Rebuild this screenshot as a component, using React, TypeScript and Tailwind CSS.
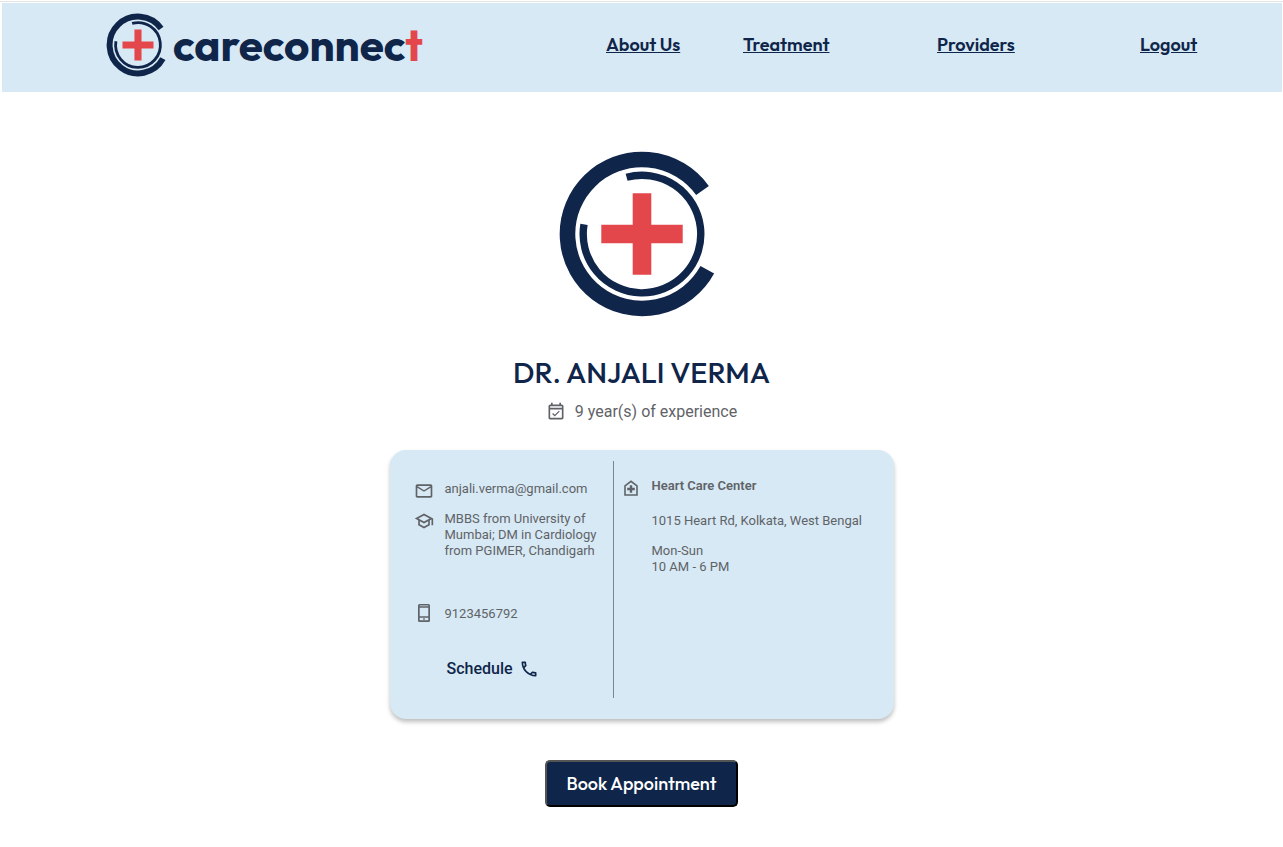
import type { ReactNode } from "react";
import {
  MdOutlineCall,
  MdOutlineEventAvailable,
  MdOutlineMail,
  MdOutlineSchool,
} from "react-icons/md";

const navLinks = [
  { label: "About Us", className: "w-[137px]" },
  { label: "Treatment", className: "w-[194px]" },
  { label: "Providers", className: "w-[203px]" },
  { label: "Logout", className: "w-[60px]" },
];

function LogoMark({ className }: { className: string }) {
  return (
    <svg viewBox="-84 -84 168 168" className={className} aria-hidden="true">
      <path d="M60.5 -43.5A74.5 74.5 0 1 0 65.3 35.8" fill="none" stroke="#0f254a" strokeWidth="15.6" />
      <path d="M-15.4 -56.7A58.8 58.8 0 1 1 -58 -9.7" fill="none" stroke="#0f254a" strokeWidth="7.4" />
      <path d="M-9.3 -40.7H9.3V-9.3H40.7V9.3H9.3V40.7H-9.3V9.3H-40.7V-9.3H-9.3Z" fill="#e3474b" />
    </svg>
  );
}

function MobileIcon() {
  return (
    <svg viewBox="0 0 20 20" className="size-5" fill="currentColor" fillRule="evenodd" aria-hidden="true">
      <path d="M5.5 1h9A1.5 1.5 0 0 1 16 2.5v15a1.5 1.5 0 0 1-1.5 1.5h-9A1.5 1.5 0 0 1 4 17.5v-15A1.5 1.5 0 0 1 5.5 1ZM5.7 2.5v.7h8.6v-.7ZM5.7 4.7v8.6h8.6V4.7ZM5.7 14.8v2.5h8.6v-2.5ZM9.2 15.3h1.6v1.4H9.2Z" />
    </svg>
  );
}

function HospitalIcon() {
  return (
    <svg viewBox="0 0 20 20" className="size-5" aria-hidden="true">
      <path d="M4 17V7.8L10 3.3 16 7.8V17Z" fill="none" stroke="currentColor" strokeWidth="1.6" />
      <path d="M8.8 7.2h2.4v2.6h2.6v2.4h-2.6v2.6H8.8v-2.6H6.2V9.8h2.6Z" fill="currentColor" />
    </svg>
  );
}

function Detail({ icon, children, className }: { icon: ReactNode; children: ReactNode; className: string }) {
  return (
    <div className={`flex items-start gap-[11px] ${className}`}>
      <span className="shrink-0">{icon}</span>
      <div>{children}</div>
    </div>
  );
}

export default function App() {
  return (
    <div className="min-h-screen bg-white font-['Roboto',sans-serif] text-[#5f6368]">
      <div className="my-px border-t border-[#e4e4e4]" />
      <header className="mr-px ml-0.5 flex h-[89px] items-start justify-between bg-[#d7e9f4] pr-[82px] pl-[104px] font-['Outfit','Lato',sans-serif] text-[#0f254a]">
        <a href="#" className="flex items-center gap-[3px] pt-[10px]">
          <LogoMark className="size-16" />
          <span className="text-[44px] leading-[62px] font-bold">
            careconnec<span className="text-[#e3474b]">t</span>
          </span>
        </a>
        <nav className="flex pt-[30px] text-[18px] leading-6 font-semibold">
          {navLinks.map((link) => (
            <div key={link.label} className={link.className}>
              <a href="#" className="whitespace-nowrap underline">
                {link.label}
              </a>
            </div>
          ))}
        </nav>
      </header>

      <main className="flex flex-col items-center">
        <LogoMark className="mt-[58px] size-[168px]" />
        <h1 className="mt-[35px] font-['Outfit','Lato',sans-serif] text-[29px] leading-10 font-medium text-[#0f254a]">
          DR. ANJALI VERMA
        </h1>
        <p className="mt-[7px] flex items-center gap-[9px] text-base leading-6">
          <MdOutlineEventAvailable className="size-5" />
          9 year(s) of experience
        </p>

        <section className="mt-[26px] flex h-[269px] w-[504px] rounded-2xl bg-[#d7e9f4] pt-[11px] pb-[21px] text-[13px] leading-4 shadow-[0_3px_4px_rgba(0,0,0,0.25)]">
          <div className="w-[223px] shrink-0 pl-6">
            <Detail icon={<MdOutlineMail className="size-5" />} className="mt-5 h-[30px]">
              <a href="mailto:anjali.verma@gmail.com">anjali.verma@gmail.com</a>
            </Detail>
            <Detail icon={<MdOutlineSchool className="size-5" />} className="h-[92px]">
              <p className="w-[160px]">MBBS from University of Mumbai; DM in Cardiology from PGIMER, Chandigarh</p>
            </Detail>
            <Detail icon={<MobileIcon />} className="h-[54px] *:last:pt-[3px]">
              <a href="tel:9123456792">9123456792</a>
            </Detail>
            <button type="button" className="ml-[33px] flex items-center gap-1.5 text-base leading-6 font-medium text-[#0f254a]">
              Schedule
              <MdOutlineCall className="size-5" />
            </button>
          </div>
          <div className="w-px bg-[#7d868c]" />
          <Detail icon={<HospitalIcon />} className="mt-[17px] pl-[7px]">
            <h2 className="font-semibold">Heart Care Center</h2>
            <p className="mt-[19px]">1015 Heart Rd, Kolkata, West Bengal</p>
            <p className="mt-[14px]">
              Mon-Sun
              <br />
              10 AM - 6 PM
            </p>
          </Detail>
        </section>

        <button
          type="button"
          className="mt-[41px] h-[47px] w-[193px] rounded-[5px] border-2 border-black bg-[#0f254a] font-['Outfit','Lato',sans-serif] text-[18px] font-medium text-white [border-style:outset]"
        >
          Book Appointment
        </button>
      </main>
    </div>
  );
}
